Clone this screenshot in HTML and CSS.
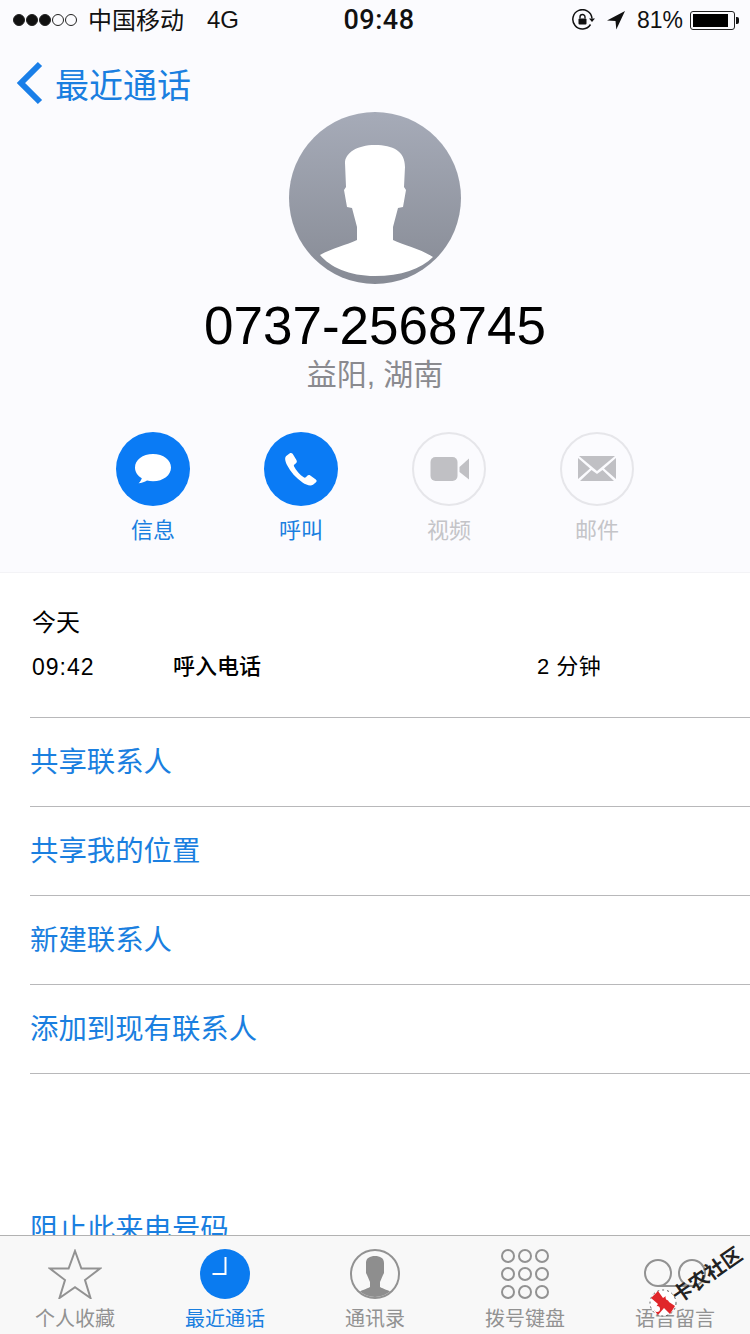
FILE: index.html
```html
<!DOCTYPE html>
<html>
<head>
  <title>最近通话</title>
  <link rel="stylesheet" href="styles.css">
</head>
<body>
  <div class="page">
    <div class="content">
      <div class="top">
        <!-- status bar -->
        <div class="status">
          <div class="status-left">
            <span class="signal">
              <i class="dot on"></i><i class="dot on"></i><i class="dot on"></i><i class="dot"></i><i class="dot"></i>
            </span>
            <span class="carrier">中国移动</span>
            <span class="net">4G</span>
          </div>
          <div class="clock">09:48</div>
          <div class="status-right">
            <svg class="ic-lock" width="24" height="22" viewBox="0 0 24 22">
              <path d="M18.500 15.500A9.600 9.600 0 1 1 20 9.500" fill="none" stroke="#111" stroke-width="1.500"/>
              <path d="M17 9.500h6l-3 3.500z" fill="#111"/>
              <rect x="6.500" y="9.500" width="8" height="6" rx="1" fill="#111"/>
              <path d="M8 9.500V8a2.500 2.500 0 0 1 5 0v1.500" fill="none" stroke="#111" stroke-width="1.400"/>
            </svg>
            <svg class="ic-arrow" width="20" height="20" viewBox="0 0 20 20">
              <path d="M19 1 1 10.500l8.500.5.8 8.500z" fill="#111"/>
            </svg>
            <span class="percent">81%</span>
            <span class="battery"><span class="battery-fill"></span></span>
            <span class="battery-tip"></span>
          </div>
        </div>

        <div class="nav">
          <svg width="28" height="44" viewBox="0 0 28 44">
            <path d="M24 3 5 22l19 19" fill="none" stroke="#1a7fe8" stroke-width="6"/>
          </svg>
          <span class="nav-title">最近通话</span>
        </div>

        <div class="avatar">
          <svg width="172" height="172" viewBox="0 0 172 172">
            <defs>
              <linearGradient id="avatarBg" x1="0" y1="0" x2="0" y2="1">
                <stop offset="0" stop-color="#a6abb8"/>
                <stop offset="1" stop-color="#878b95"/>
              </linearGradient>
              <clipPath id="avatarClip"><circle cx="86" cy="86" r="86"/></clipPath>
            </defs>
            <circle cx="86" cy="86" r="86" fill="url(#avatarBg)"/>
            <path clip-path="url(#avatarClip)" fill="#fff" d="M31 143C43 136 58 133 68 128L68 115 63 96 58 95 55 78 57 75 56 51C56 41 68 33 86 33C104 33 116 39 116 55L115 75 117 78 114 95 109 96 104 115 104 128C114 133 132 137 144 145C132 157 112 164 86 164C60 164 41 155 31 143Z"/>
          </svg>
        </div>

        <div class="number">0737-2568745</div>
        <div class="region">益阳, 湖南</div>

        <div class="actions">
          <div class="action">
            <div class="circle solid">
              <svg width="40" height="36" viewBox="0 0 40 36">
                <path fill="#fff" d="M20 3C9.500 3 2 9 2 16.500c0 4.500 2.700 8.300 6.800 10.700-.5 1.800-1.700 3.700-3.300 5 3.200 0 6.300-1.100 8.500-2.600 1.900.4 3.900.6 6 .6 10.500 0 18-6.100 18-13.700S30.500 3 20 3z"/>
              </svg>
            </div>
            <span class="action-label">信息</span>
          </div>
          <div class="action">
            <div class="circle solid">
              <svg width="36" height="36" viewBox="0 0 36 36">
                <path fill="#fff" d="M6.500 2.500 3.200 5C1.500 6.500 2 10 4 14c3.500 7 9 13 15.500 17.500 3.500 2.400 8 3.800 10.500 2.200l3-2.500c1-1 .8-2-.2-2.800l-5.500-3.900c-1.200-.8-2.200-.6-3 .2l-1.500 1.500c-.6.600-1.300.6-2.100.1-3.700-2.400-7.700-7-9.600-10.800-.4-.9-.3-1.500.3-2l1.600-1.300c1-.8 1.100-2 .4-3.200L9.800 3c-.8-1.100-2.200-1.300-3.300-.5z"/>
              </svg>
            </div>
            <span class="action-label">呼叫</span>
          </div>
          <div class="action off">
            <div class="circle">
              <svg width="40" height="26" viewBox="-1.500 -1 40 26">
                <rect x="0" y="0" width="27" height="24" rx="5" fill="#c0c0c4"/>
                <path d="M29 10 39 1v22L29 15z" fill="#c0c0c4"/>
              </svg>
            </div>
            <span class="action-label">视频</span>
          </div>
          <div class="action off">
            <div class="circle">
              <svg width="38" height="26" viewBox="0 0 38 26">
                <path d="M1 0h36L19 15z" fill="#c0c0c4"/>
                <path d="M0 2v21l12-10.500zM38 2v21L26 12.500z" fill="#c0c0c4"/>
                <path d="M2 25 13.500 14l5.500 4 5.500-4L36 25z" fill="#c0c0c4"/>
              </svg>
            </div>
            <span class="action-label">邮件</span>
          </div>
        </div>
      </div>

      <div class="calls">
        <div class="calls-day">今天</div>
        <div class="call-row">
          <span class="call-time">09:42</span>
          <span class="call-type">呼入电话</span>
          <span class="call-len">2 分钟</span>
        </div>
      </div>

      <div class="links">
        <div class="link">共享联系人</div>
        <div class="link">共享我的位置</div>
        <div class="link">新建联系人</div>
        <div class="link">添加到现有联系人</div>
      </div>

      <div class="block-link">阻止此来电号码</div>
    </div>

    <!-- bottom tabs -->
    <div class="tabbar">
      <div class="tab">
        <svg width="54" height="50" viewBox="0 0 54 50">
          <path d="M27 2l6.400 17.600H52L37 31l5.500 18L27 38.200 11.500 49 17 31 2 19.600h18.600z" fill="none" stroke="#929292" stroke-width="2"/>
        </svg>
        <span>个人收藏</span>
      </div>
      <div class="tab active">
        <svg width="50" height="50" viewBox="0 0 50 50">
          <circle cx="25" cy="25" r="25" fill="#0a7bf0"/>
          <path d="M25.500 8v17H12.500" fill="none" stroke="#fff" stroke-width="2"/>
        </svg>
        <span>最近通话</span>
      </div>
      <div class="tab">
        <svg width="50" height="50" viewBox="0 0 50 50">
          <defs><clipPath id="contactClip"><circle cx="25" cy="25" r="23"/></clipPath></defs>
          <path clip-path="url(#contactClip)" fill="#8e8e8e" d="M8 44c3-3 9-4 12-6v-5l-3-7-1-2V14c0-5 4-7 9-7s9 2 9 7v10l-1 2-3 7v5c3 2 9 3 12 6l-5 6H13z"/>
          <circle cx="25" cy="25" r="24" fill="none" stroke="#929292" stroke-width="2"/>
        </svg>
        <span>通讯录</span>
      </div>
      <div class="tab">
        <div class="keypad">
          <i></i><i></i><i></i><i></i><i></i><i></i><i></i><i></i><i></i>
        </div>
        <span>拨号键盘</span>
      </div>
      <div class="tab">
        <svg width="62" height="50" viewBox="0 0 62 50">
          <circle cx="14" cy="24" r="13" fill="none" stroke="#929292" stroke-width="2"/>
          <circle cx="48" cy="24" r="13" fill="none" stroke="#929292" stroke-width="2"/>
          <path d="M14 37h34" fill="none" stroke="#929292" stroke-width="2"/>
        </svg>
        <span>语音留言</span>
      </div>
    </div>

    <!-- forum watermark on top of the screenshot -->
    <div class="mark">
      <svg class="mark-logo" width="28" height="28" viewBox="0 0 28 28">
        <circle cx="14" cy="14" r="13" fill="#fff" stroke="#555" stroke-width="1" stroke-dasharray="2 3"/>
        <path d="M2 9 9 2l5 7 3-2 3 6 6 4-5 8-6-6-6 7-4-5 4-6z" fill="#e0262a"/>
        <circle cx="20" cy="8" r="3.500" fill="#fff"/>
        <circle cx="8" cy="20" r="3" fill="#fff"/>
      </svg>
      <span class="mark-text">卡农社区</span>
    </div>
  </div>
</body>
</html>
```

FILE: styles.css
```css
html, body {
  margin: 0;
  padding: 0;
  background: #fff;
}

body {
  font-family: "Liberation Sans", "Noto Sans CJK SC", sans-serif;
}

.page {
  position: relative;
  width: 750px;
  height: 1334px;
  display: flex;
  flex-direction: column;
  overflow: hidden;
}

.content {
  flex: 1;
  min-height: 0;
  overflow: hidden;
}

.top {
  height: 572px;
  background: #fbfbfe;
  border-bottom: 1px solid #f3f3f6;
}

/* status bar */
.status {
  height: 40px;
  display: flex;
  align-items: center;
  justify-content: space-between;
  padding: 0 11px 0 13px;
  color: #111;
  font-size: 24px;
}

.status-left, .status-right {
  display: flex;
  align-items: center;
}

.status-left {
  width: 306px;
}

.status-right {
  width: 300px;
  justify-content: flex-end;
}

.signal {
  display: flex;
  gap: 1px;
  margin-right: 11px;
}

.dot {
  width: 12px;
  height: 12px;
  box-sizing: border-box;
  border: 1px solid #222;
  border-radius: 50%;
}

.dot.on {
  background: #111;
}

.carrier {
  margin: 0 23px 3px 0;
}

.clock {
  font-family: Roboto, sans-serif;
  font-weight: 500;
  font-size: 27px;
  letter-spacing: 0.5px;
}

.ic-lock {
  margin-right: 10px;
}

.ic-arrow {
  margin-right: 11px;
}

.percent {
  margin-right: 7px;
  font-size: 23px;
}

.battery {
  width: 45px;
  height: 19px;
  box-sizing: border-box;
  border: 1px solid #222;
  border-radius: 3px;
  padding: 2px;
  display: block;
}

.battery-fill {
  display: block;
  width: 35px;
  height: 13px;
  background: #000;
}

.battery-tip {
  width: 3px;
  height: 7px;
  margin-left: 1px;
  background: #111;
  border-radius: 0 2px 2px 0;
}

/* back link */
.nav {
  height: 44px;
  margin-top: 21px;
  padding-left: 16px;
  display: flex;
  align-items: center;
}

.nav-title {
  margin-left: 11px;
  font-size: 34px;
  color: #1a7fe0;
}

.avatar {
  width: 172px;
  height: 172px;
  margin: 7px auto 0;
}

.avatar svg {
  display: block;
}

.number {
  margin-top: 12px;
  height: 60px;
  line-height: 60px;
  text-align: center;
  font-size: 53px;
  color: #000;
}

.region {
  height: 38px;
  line-height: 38px;
  text-align: center;
  font-size: 30px;
  color: #8a8a8f;
}

.actions {
  margin-top: 38px;
  display: flex;
  justify-content: center;
}

.action {
  width: 148px;
  display: flex;
  flex-direction: column;
  align-items: center;
}

.circle {
  width: 74px;
  height: 74px;
  box-sizing: border-box;
  border: 2px solid #e6e6ea;
  border-radius: 50%;
  display: flex;
  align-items: center;
  justify-content: center;
}

.circle.solid {
  background: #0a7bf5;
  border: none;
}

.action-label {
  margin-top: 10px;
  line-height: 30px;
  font-size: 22px;
  color: #1a7fe0;
}

.action.off .action-label {
  color: #c4c4c8;
}

/* call log */
.calls {
  height: 144px;
  padding: 32px 0 0 32px;
  box-sizing: border-box;
  color: #000;
}

.calls-day {
  font-size: 24px;
  line-height: 36px;
}

.call-row {
  margin-top: 8px;
  display: flex;
  font-size: 22px;
  line-height: 36px;
}

.call-time {
  width: 141px;
  font-size: 23px;
  letter-spacing: 1px;
}

.call-type {
  width: 364px;
  font-weight: 500;
}

.call-len {
  letter-spacing: 0.5px;
}

.links {
  margin-left: 30px;
  border-top: 1px solid #b8b8ba;
}

.link {
  height: 88px;
  line-height: 88px;
  border-bottom: 1px solid #b8b8ba;
  font-size: 28.4px;
  color: #1a7fe0;
}

.block-link {
  margin: 135px 0 0 30px;
  line-height: 40px;
  font-size: 28.4px;
  color: #1a7fe0;
}

/* tab bar */
.tabbar {
  height: 99px;
  flex-shrink: 0;
  box-sizing: border-box;
  padding-top: 13px;
  display: flex;
  background: #f8f8f8;
  border-top: 1px solid #b2b2b2;
}

.tab {
  width: 150px;
  display: flex;
  flex-direction: column;
  align-items: center;
  font-size: 20px;
  color: #929292;
}

.tab svg {
  display: block;
}

.tab span {
  margin-top: 6px;
  line-height: 28px;
}

.tab.active span {
  color: #1a7fe0;
}

.keypad {
  width: 48px;
  height: 50px;
  display: grid;
  grid-template-columns: repeat(3, 14px);
  grid-template-rows: repeat(3, 14px);
  justify-content: space-between;
  align-content: space-between;
}

.keypad i {
  box-sizing: border-box;
  border: 2px solid #929292;
  border-radius: 50%;
}

/* watermark */
.mark {
  position: absolute;
  left: 648px;
  top: 1240px;
  width: 100px;
  height: 84px;
}

.mark-logo {
  position: absolute;
  left: 1px;
  bottom: 7px;
}

.mark-text {
  position: absolute;
  left: 19px;
  top: 21px;
  font-size: 20px;
  font-weight: bold;
  line-height: 28px;
  white-space: nowrap;
  color: #222;
  transform: rotate(-35deg);
}
```
